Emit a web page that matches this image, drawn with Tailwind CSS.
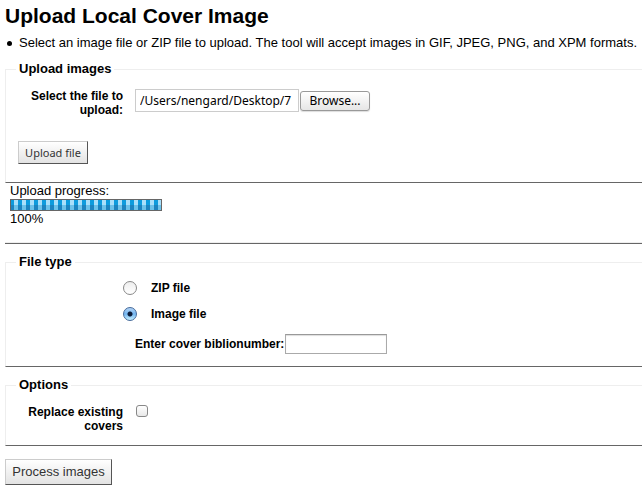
<!DOCTYPE html>
<html lang="en">
<head>
<meta charset="utf-8">
<meta name="viewport" content="width=device-width, initial-scale=1">
<title>Upload Local Cover Image</title>
<script src="https://cdn.jsdelivr.net/npm/@tailwindcss/browser@4"></script>
</head>
<body class="bg-white pl-[5px] font-['Liberation_Sans',Arial,sans-serif] text-[13px] leading-4 text-black">
<main>
  <h1 class="pt-1 text-[21px] leading-6 font-bold">Upload Local Cover Image</h1>
  <ul class="mt-[7px] pl-0.5">
    <li class="flex items-center gap-[7px] before:size-[5px] before:shrink-0 before:rounded-full before:bg-black">Select an image file or ZIP file to upload. The tool will accept images in GIF, JPEG, PNG, and XPM formats.</li>
  </ul>

  <form class="mt-[10px]">
    <fieldset class="border-t border-b border-l border-[#eee] border-b-[#666] px-[10px] pb-[18px]">
      <legend class="px-[3px] font-bold">Upload images</legend>
      <div class="flex items-start pt-3">
        <label for="file" class="mr-3 w-[107px] text-right text-xs leading-[14px] font-bold">Select the file to upload:</label>
        <input id="file" type="text" readonly value="/Users/nengard/Desktop/7" class="h-[23px] w-[164px] border border-[#ccc] px-1 font-['Noto_Sans',sans-serif] text-xs outline-none">
        <button type="button" class="mt-0.5 ml-px h-5 w-[70px] rounded-[3px] border border-[#999] bg-linear-to-b from-white to-[#e6e6e6] font-['Noto_Sans',sans-serif] text-xs leading-4 shadow-[0_1px_1px_#ddd]">Browse...</button>
      </div>
      <button type="button" class="mt-6 ml-0.5 block h-[23px] w-[70px] border border-[#ccc] border-r-[#555] border-b-[#555] bg-linear-to-b from-white to-[#e3e3e3] font-['Noto_Sans',sans-serif] text-[11px] leading-4 text-[#333]">Upload file</button>
    </fieldset>
  </form>

  <section class="border-b border-[#666] pb-4 pl-[5px] shadow-[inset_0_-1px_#eee]">
    <div id="progress-label" class="leading-4">Upload progress:</div>
    <div role="progressbar" aria-labelledby="progress-label" aria-valuenow="100" aria-valuemin="0" aria-valuemax="100" class="flex h-3 w-[152px] flex-col justify-end border border-[#666] bg-[repeating-linear-gradient(90deg,#0d9bdd_0_3px,#a9dffa_3px_7px,#0d9bdd_7px_8px)]">
      <div class="h-1/2 bg-[repeating-linear-gradient(90deg,#1c83bf_0_3px,#6cc2ea_3px_7px,#1c83bf_7px_8px)]"></div>
    </div>
    <div class="leading-4">100%</div>
  </section>

  <form class="mt-[10px]">
    <fieldset class="border-t border-b border-l border-[#eee] border-b-[#666] px-[10px] pb-3 text-xs font-bold">
      <legend class="px-[3px] text-[13px] leading-4">File type</legend>
      <div class="flex items-center pt-[10px] pl-[107px]">
        <input id="zip" type="radio" name="filetype" class="size-[14px] appearance-none rounded-full border border-[#888] bg-linear-to-b from-[#eee] to-white checked:border-[#44699a] checked:bg-[radial-gradient(circle,#0a1c3a_0_2px,transparent_3px),linear-gradient(#b3d3f5,#72b5f0_50%,#c6f0ff)]">
        <label for="zip" class="pl-[14px] leading-4">ZIP file</label>
      </div>
      <div class="flex items-center pt-[10px] pl-[107px]">
        <input id="image" type="radio" name="filetype" checked class="size-[14px] appearance-none rounded-full border border-[#888] bg-linear-to-b from-[#eee] to-white checked:border-[#44699a] checked:bg-[radial-gradient(circle,#0a1c3a_0_2px,transparent_3px),linear-gradient(#b3d3f5,#72b5f0_50%,#c6f0ff)]">
        <label for="image" class="pl-[14px] leading-4">Image file</label>
      </div>
      <div class="flex items-center pt-3 pl-[119px]">
        <label for="biblio" class="pr-px leading-4">Enter cover biblionumber:</label>
        <input id="biblio" type="text" class="h-5 w-[102px] border border-[#aaa] border-t-[#999] px-1 font-normal shadow-[inset_0_1px_1px_#ddd] outline-none">
      </div>
    </fieldset>

    <fieldset class="mt-[10px] border-t border-b border-l border-[#eee] border-b-[#666] px-[10px] pb-3 text-xs font-bold">
      <legend class="px-[3px] text-[13px] leading-4">Options</legend>
      <div class="flex items-start pt-3">
        <label for="replace" class="mr-[13px] w-[107px] text-right leading-[14px]">Replace existing covers</label>
        <input id="replace" type="checkbox" class="size-3 appearance-none rounded-[3px] border border-[#888] bg-linear-to-b from-white to-[#e8e8e8] checked:bg-[#72b5f0]">
      </div>
    </fieldset>

    <button type="submit" class="mt-[13px] h-[26px] w-[107px] border border-[#ccc] border-r-[#555] border-b-[#555] bg-linear-to-b from-white to-[#e3e3e3] text-[13px] text-[#333]">Process images</button>
  </form>
</main>
</body>
</html>
